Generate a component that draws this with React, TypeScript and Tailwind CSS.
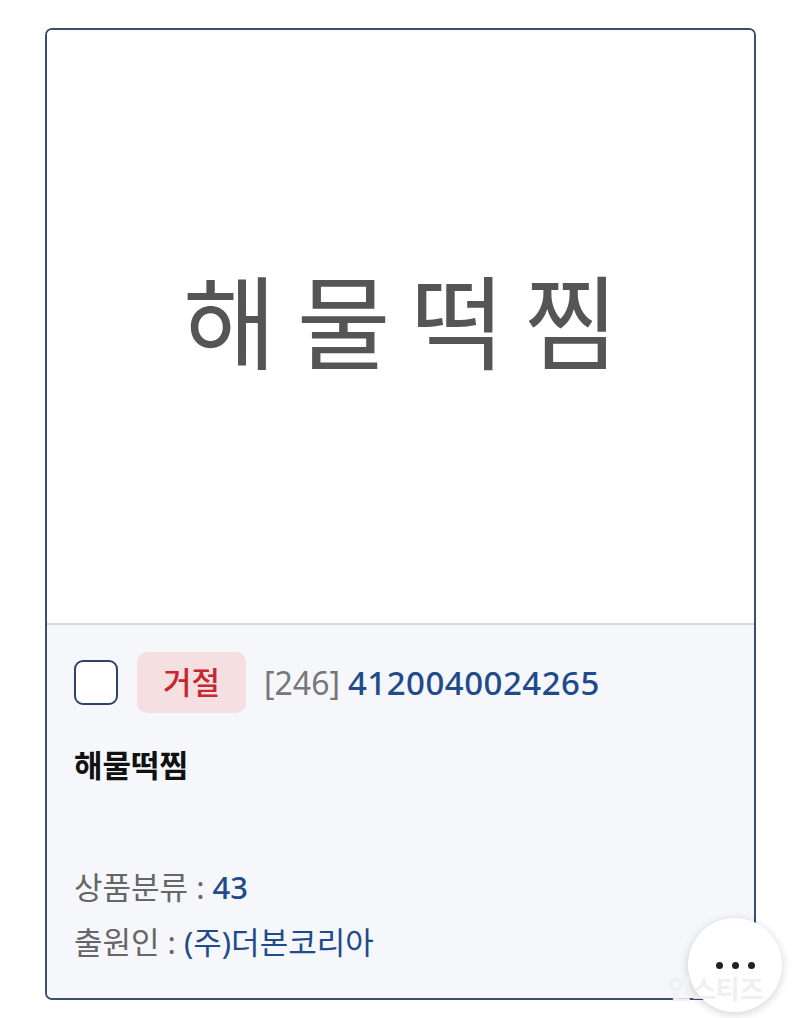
import React from 'react';

const font = { fontFamily: '"Noto Sans", "Noto Sans CJK KR", sans-serif' };

function MoreButton() {
  return (
    <button
      type="button"
      className="absolute left-[688px] top-[918px] flex h-[94px] w-[94px] items-center justify-center gap-[9px] rounded-full bg-white shadow-[0_2px_10px_rgba(0,0,0,0.18)]"
    >
      <span className="h-[7px] w-[7px] rounded-full bg-[#222]" />
      <span className="h-[7px] w-[7px] rounded-full bg-[#222]" />
      <span className="h-[7px] w-[7px] rounded-full bg-[#222]" />
      <span className="absolute left-[-20px] top-[52px] text-[26px] font-bold text-[#f0f0f0]">인스티즈</span>
    </button>
  );
}

export default function App() {
  return (
    <div className="relative h-[1018px] w-[800px] overflow-hidden bg-white" style={font}>
      <div className="pl-[45px] pt-[28px]">
        <div className="flex h-[972px] w-[711px] flex-col overflow-hidden rounded-[7px] border-2 border-[#3b4f6e]">
          <div className="flex h-[593px] items-center justify-center bg-white">
            <span className="pb-[8px] pl-[20px] text-[102px] font-normal leading-none tracking-[20px] text-[#555]">
              해물떡찜
            </span>
          </div>
          <div className="flex flex-1 flex-col border-t-2 border-[#d4d7dc] bg-[#f5f7fb] px-[27px] pt-[27px]">
            <div className="flex items-center">
              <span className="h-[45px] w-[44px] rounded-[9px] border-[2.5px] border-[#2d4466] bg-white" />
              <span className="ml-[19px] flex h-[61px] w-[109px] items-center justify-center rounded-[10px] bg-[#f6dfe0] text-[31px] font-medium text-[#c4282f]">
                거절
              </span>
              <span className="ml-[18px] text-[32px] text-[#777]">[246]</span>
              <span className="ml-[8px] text-[33px] font-medium tracking-[0.5px] text-[#1f4b8b]">4120040024265</span>
            </div>
            <div className="mt-[31px] text-[31px] font-bold leading-[42px] text-[#111]">해물떡찜</div>
            <div className="mt-[80px] text-[31px] leading-[42px] text-[#666]">
              상품분류 : <span className="font-medium text-[#1f4b8b]">43</span>
            </div>
            <div className="mt-[13px] text-[31px] leading-[42px] text-[#666]">
              출원인 : <span className="text-[#1f4b8b]">(주)더본코리아</span>
            </div>
          </div>
        </div>
      </div>
      <MoreButton />
    </div>
  );
}
